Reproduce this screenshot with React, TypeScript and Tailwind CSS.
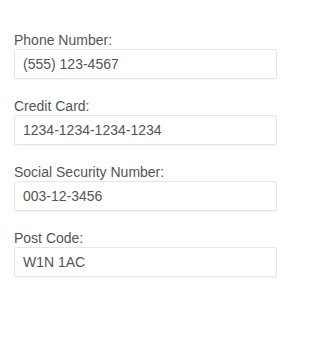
import React from 'react';

const fields = [
  { label: 'Phone Number:', value: '(555) 123-4567' },
  { label: 'Credit Card:', value: '1234-1234-1234-1234' },
  { label: 'Social Security Number:', value: '003-12-3456' },
  { label: 'Post Code:', value: 'W1N 1AC' },
];

export default function App() {
  return (
    <div className="w-[290px] h-[339px] bg-white pl-[14px] pr-[13px] pt-[32px] font-['Liberation_Sans',Arial,sans-serif]">
      <div className="flex flex-col gap-[19px]">
        {fields.map((f) => (
          <div key={f.label} className="flex flex-col">
            <label className="text-[14px] leading-[17px] text-[#555555]">{f.label}</label>
            <input
              readOnly
              defaultValue={f.value}
              className="h-[30px] w-full px-2 font-['Liberation_Sans',Arial,sans-serif] text-[14px] text-[#555555] border border-[#e6e6e6] rounded-[2px] shadow-[0_1px_1px_rgba(0,0,0,0.04)] outline-none bg-white"
            />
          </div>
        ))}
      </div>
    </div>
  );
}
